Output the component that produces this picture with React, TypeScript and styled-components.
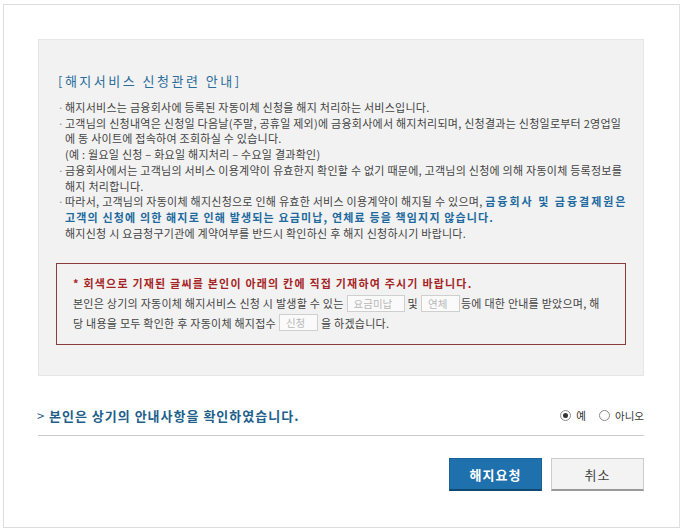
import styled, { createGlobalStyle } from 'styled-components';
import { useState } from 'react';

const GlobalStyle = createGlobalStyle`
    html, body {
        margin: 0;
        padding: 0;
        background: #fff;
        font-family: "Noto Sans CJK KR", "Noto Sans", sans-serif;
    }
`;

const notices = [
    {
        lines: ['해지서비스는 금융회사에 등록된 자동이체 신청을 해지 처리하는 서비스입니다.'],
    },
    {
        lines: [
            '고객님의 신청내역은 신청일 다음날(주말, 공휴일 제외)에 금융회사에서 해지처리되며, 신청결과는 신청일로부터 2영업일',
            '에 동 사이트에 접속하여 조회하실 수 있습니다.',
            '(예 : 월요일 신청 – 화요일 해지처리 – 수요일 결과확인)',
        ],
    },
    {
        lines: [
            '금융회사에서는 고객님의 서비스 이용계약이 유효한지 확인할 수 없기 때문에, 고객님의 신청에 의해 자동이체 등록정보를',
            '해지 처리합니다.',
        ],
    },
];

export default function App() {
    const [agree, setAgree] = useState<'yes' | 'no'>('yes');

    return (
        <>
            <GlobalStyle />
            <Styled.Frame>
                <Styled.Panel>
                    <Styled.Title>[해지서비스 신청관련 안내]</Styled.Title>
                    <Styled.List>
                        {notices.map((n, i) => (
                            <Styled.Item key={i}>
                                <Styled.Dot>·</Styled.Dot>
                                <div>
                                    {n.lines.map((l, j) => (
                                        <Styled.Line key={j}>{l}</Styled.Line>
                                    ))}
                                </div>
                            </Styled.Item>
                        ))}
                        <Styled.Item>
                            <Styled.Dot>·</Styled.Dot>
                            <div>
                                <Styled.Line>
                                    따라서, 고객님의 자동이체 해지신청으로 인해 유효한 서비스 이용계약이 해지될 수 있으며,{' '}
                                    <Styled.Strong $ls={2}>금융회사 및 금융결제원은</Styled.Strong>
                                </Styled.Line>
                                <Styled.Line>
                                    <Styled.Strong>고객의 신청에 의한 해지로 인해 발생되는 요금미납, 연체료 등을 책임지지 않습니다.</Styled.Strong>
                                </Styled.Line>
                                <Styled.Line>해지신청 시 요금청구기관에 계약여부를 반드시 확인하신 후 해지 신청하시기 바랍니다.</Styled.Line>
                            </div>
                        </Styled.Item>
                    </Styled.List>

                    <Styled.Notice>
                        <Styled.Warn>* 회색으로 기재된 글씨를 본인이 아래의 칸에 직접 기재하여 주시기 바랍니다.</Styled.Warn>
                        <Styled.FormLine>
                            본인은 상기의 자동이체 해지서비스 신청 시 발생할 수 있는
                            <Styled.Field $w={58} placeholder="요금미납" />
                            및
                            <Styled.Field $w={39} placeholder="연체" $tight />
                            등에 대한 안내를 받았으며, 해
                        </Styled.FormLine>
                        <Styled.FormLine>
                            당 내용을 모두 확인한 후 자동이체 해지접수
                            <Styled.Field $w={39} placeholder="신청" />
                            을 하겠습니다.
                        </Styled.FormLine>
                    </Styled.Notice>
                </Styled.Panel>

                <Styled.ConfirmRow>
                    <Styled.ConfirmText>
                        <Styled.Chevron>&gt;</Styled.Chevron>본인은 상기의 안내사항을 확인하였습니다.
                    </Styled.ConfirmText>
                    <Styled.Radios>
                        <Styled.RadioLabel onClick={() => setAgree('yes')}>
                            <Styled.Radio $on={agree === 'yes'} />예
                        </Styled.RadioLabel>
                        <Styled.RadioLabel onClick={() => setAgree('no')}>
                            <Styled.Radio $on={agree === 'no'} />아니오
                        </Styled.RadioLabel>
                    </Styled.Radios>
                </Styled.ConfirmRow>

                <Styled.Buttons>
                    <Styled.Button $primary>해지요청</Styled.Button>
                    <Styled.Button>취소</Styled.Button>
                </Styled.Buttons>
            </Styled.Frame>
        </>
    );
}

const Styled = {
    Frame: styled.div`
        box-sizing: border-box;
        width: 677px;
        height: 524px;
        margin: 4px 0 0 3px;
        padding: 34px 35px 0 34px;
        border: 1px solid #dcdcdc;
        border-right-color: #e2e2e2;
    `,
    Panel: styled.div`
        background: #f2f2f2;
        border: 1px solid #e6e6e6;
        padding: 32px 17px 30px 17px;
    `,
    Title: styled.h2`
        margin: 0 0 10px 2px;
        font-size: 13px;
        line-height: 18px;
        font-weight: normal;
        letter-spacing: 2.5px;
        color: #2a6c9a;
    `,
    List: styled.ul`
        list-style: none;
        margin: 0 0 22px 2px;
        padding: 0;
    `,
    Item: styled.li`
        display: flex;
    `,
    Dot: styled.span`
        width: 7px;
        flex: none;
        color: #888;
        font-size: 10px;
        line-height: 15.7px;
    `,
    Line: styled.div`
        white-space: nowrap;
        font-size: 11px;
        line-height: 15.7px;
        letter-spacing: 0.25px;
        color: #444;
    `,
    Strong: styled.b<{ $ls?: number }>`
        color: #1d6a9e;
        letter-spacing: ${p => p.$ls ?? 1.15}px;
    `,
    Notice: styled.div`
        border: 1px solid #8c3b3b;
        padding: 9px 16px 12px 16px;
    `,
    Warn: styled.div`
        font-size: 11px;
        line-height: 20px;
        font-weight: bold;
        letter-spacing: 1.2px;
        color: #a52525;
        white-space: nowrap;
    `,
    FormLine: styled.div`
        display: flex;
        align-items: center;
        height: 19.5px;
        font-size: 11px;
        letter-spacing: 0.25px;
        color: #444;
        white-space: pre;
    `,
    Field: styled.input<{ $w: number; $tight?: boolean }>`
        box-sizing: border-box;
        width: ${p => p.$w}px;
        height: 17px;
        margin: 0 ${p => (p.$tight ? 1 : 3)}px 0 3px;
        padding: 0 6px;
        border: 1px solid #cfcfcf;
        background: #fafafa;
        font-family: inherit;
        font-size: 10.5px;
        color: #444;
        &::placeholder {
            color: #b8b8b8;
        }
    `,
    ConfirmRow: styled.div`
        display: flex;
        justify-content: space-between;
        align-items: center;
        margin-top: 29px;
        padding: 0 0 10px 0;
        height: 20px;
        border-bottom: 1px solid #cccccc;
    `,
    ConfirmText: styled.div`
        font-size: 13px;
        font-weight: bold;
        letter-spacing: 1px;
        color: #215f8a;
    `,
    Chevron: styled.span`
        display: inline-block;
        width: 12px;
        margin-left: -1px;
        font-weight: normal;
        color: #215f8a;
    `,
    Radios: styled.div`
        display: flex;
        align-items: center;
        gap: 13px;
        font-size: 10.5px;
        color: #333;
    `,
    RadioLabel: styled.label`
        display: flex;
        align-items: center;
        gap: 5px;
        cursor: pointer;
    `,
    Radio: styled.span<{ $on: boolean }>`
        box-sizing: border-box;
        width: 11px;
        height: 11px;
        border: 1px solid #8a8a8a;
        border-radius: 50%;
        background: #fff;
        display: flex;
        align-items: center;
        justify-content: center;
        &::after {
            content: '';
            width: 5px;
            height: 5px;
            border-radius: 50%;
            background: ${p => (p.$on ? '#333' : 'transparent')};
        }
    `,
    Buttons: styled.div`
        display: flex;
        justify-content: flex-end;
        gap: 9px;
        margin-top: 22px;
    `,
    Button: styled.button<{ $primary?: boolean }>`
        box-sizing: border-box;
        width: 93px;
        height: 33px;
        font-family: inherit;
        font-size: 13px;
        font-weight: ${p => (p.$primary ? 'bold' : 'normal')};
        letter-spacing: 1px;
        color: ${p => (p.$primary ? '#fff' : '#444')};
        background: ${p => (p.$primary ? '#1e71ad' : '#f3f3f3')};
        border: 1px solid ${p => (p.$primary ? '#1a639a' : '#cccccc')};
        border-bottom: 2px solid ${p => (p.$primary ? '#0e4873' : '#9a9a9a')};
        cursor: pointer;
    `,
};
